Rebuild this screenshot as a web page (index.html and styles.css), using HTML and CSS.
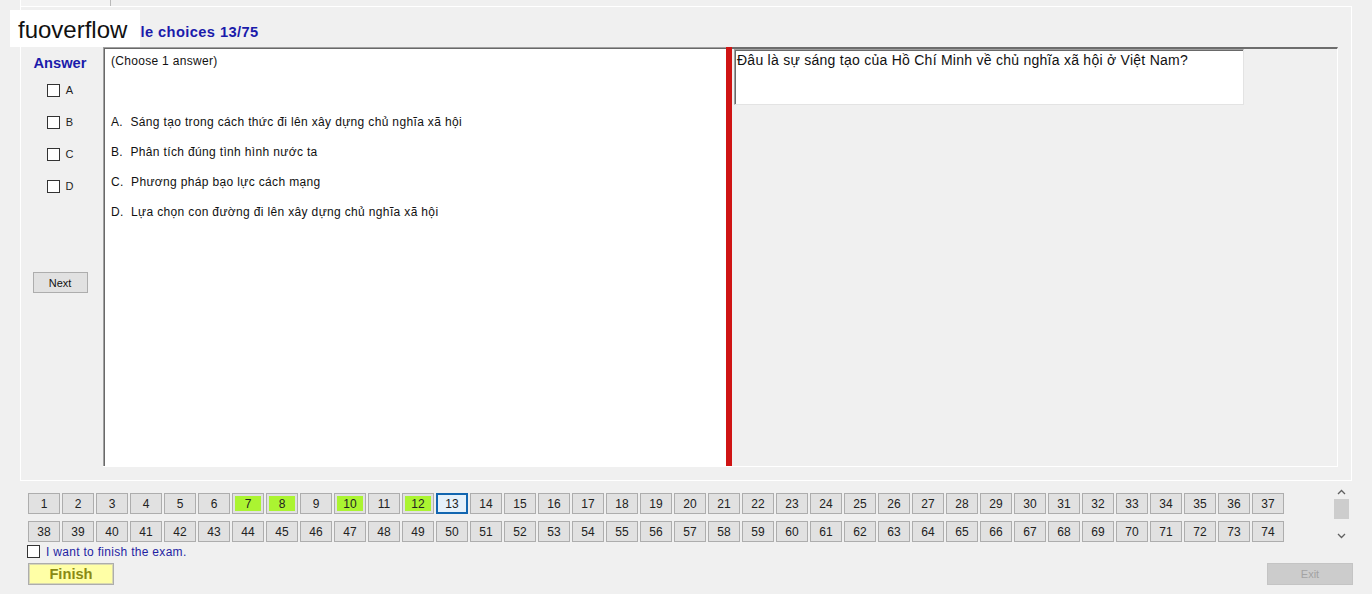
FILE: index.html
```html
<!DOCTYPE html>
<html lang="vi">
<head>
<meta charset="utf-8">
<title>Multiple choices</title>
<link rel="stylesheet" href="styles.css">
</head>
<body>
<div class="tabstrip"><div class="tab"></div></div>
<div class="tabpage">
  <div class="title">Multiple choices 13/75</div>
  <div class="main">
    <div class="answers">
      <div class="answer-head">Answer</div>
      <label class="opt"><span class="cb"></span><span>A</span></label>
      <label class="opt"><span class="cb"></span><span>B</span></label>
      <label class="opt"><span class="cb"></span><span>C</span></label>
      <label class="opt"><span class="cb"></span><span>D</span></label>
      <button class="next">Next</button>
    </div>
    <div class="split">
      <div class="left-pane">
        <div class="choose">(Choose 1 answer)</div>
        <div class="option">A.  Sáng tạo trong cách thức đi lên xây dựng chủ nghĩa xã hội</div>
        <div class="option">B.  Phân tích đúng tình hình nước ta</div>
        <div class="option">C.  Phương pháp bạo lực cách mạng</div>
        <div class="option">D.  Lựa chọn con đường đi lên xây dựng chủ nghĩa xã hội</div>
      </div>
      <div class="splitter"></div>
      <div class="right-pane">
        <div class="qbox">Đâu là sự sáng tạo của Hồ Chí Minh về chủ nghĩa xã hội ở Việt Nam?</div>
      </div>
    </div>
  </div>
</div>

<div class="numbers">
  <div class="grid">
    <button class="num">1</button><button class="num">2</button><button class="num">3</button><button class="num">4</button><button class="num">5</button><button class="num">6</button><button class="num g">7</button><button class="num g">8</button><button class="num">9</button><button class="num g">10</button><button class="num">11</button><button class="num g">12</button><button class="num cur">13</button><button class="num">14</button><button class="num">15</button><button class="num">16</button><button class="num">17</button><button class="num">18</button><button class="num">19</button><button class="num">20</button><button class="num">21</button><button class="num">22</button><button class="num">23</button><button class="num">24</button><button class="num">25</button><button class="num">26</button><button class="num">27</button><button class="num">28</button><button class="num">29</button><button class="num">30</button><button class="num">31</button><button class="num">32</button><button class="num">33</button><button class="num">34</button><button class="num">35</button><button class="num">36</button><button class="num">37</button>
    <button class="num">38</button><button class="num">39</button><button class="num">40</button><button class="num">41</button><button class="num">42</button><button class="num">43</button><button class="num">44</button><button class="num">45</button><button class="num">46</button><button class="num">47</button><button class="num">48</button><button class="num">49</button><button class="num">50</button><button class="num">51</button><button class="num">52</button><button class="num">53</button><button class="num">54</button><button class="num">55</button><button class="num">56</button><button class="num">57</button><button class="num">58</button><button class="num">59</button><button class="num">60</button><button class="num">61</button><button class="num">62</button><button class="num">63</button><button class="num">64</button><button class="num">65</button><button class="num">66</button><button class="num">67</button><button class="num">68</button><button class="num">69</button><button class="num">70</button><button class="num">71</button><button class="num">72</button><button class="num">73</button><button class="num">74</button>
  </div>
  <div class="sb">
    <div class="sb-arrow"><svg width="9" height="6" viewBox="0 0 9 6"><polyline points="1,5 4.5,1.5 8,5" fill="none" stroke="#606060" stroke-width="1.3"/></svg></div>
    <div class="sb-thumb"></div>
    <div class="sb-track"></div>
    <div class="sb-arrow"><svg width="9" height="6" viewBox="0 0 9 6"><polyline points="1,1 4.5,4.5 8,1" fill="none" stroke="#606060" stroke-width="1.3"/></svg></div>
  </div>
</div>

<label class="finish-check"><span class="cb dark"></span><span>I want to finish the exam.</span></label>
<div class="actions">
  <button class="finish">Finish</button>
  <button class="exit">Exit</button>
</div>

<div class="watermark">fuoverflow</div>
</body>
</html>
```

FILE: styles.css
```css
* { box-sizing: border-box; }
html, body { margin: 0; padding: 0; }
body {
  width: 1372px;
  height: 594px;
  overflow: hidden;
  background: #f0f0f0;
  font-family: "Liberation Sans", Arial, sans-serif;
  color: #000;
  position: relative;
}
button { font-family: inherit; padding: 0; margin: 0; cursor: default; }

.tabstrip { height: 6px; }
.tab {
  margin-left: 20px;
  width: 91px;
  height: 6px;
  border-left: 1px solid #fff;
  border-right: 1px solid #b9b9b9;
  background: #f3f3f3;
}
.tabpage {
  margin-left: 20px;
  width: 1332px;
  height: 475px;
  border: 1px solid #fff;
}
.title {
  height: 40px;
  padding: 17px 0 0 74px;
  font-weight: bold;
  font-size: 14.67px;
  line-height: 16px;
  letter-spacing: 0.4px;
  color: #1b1bab;
}
.main { display: flex; height: 420px; }

.answers {
  width: 82px;
  padding: 8px 4px 0 0;
  display: flex;
  flex-direction: column;
  align-items: center;
}
.answer-head {
  font-weight: bold;
  font-size: 14.67px;
  line-height: 16px;
  color: #1b1bab;
  margin-bottom: 3px;
}
.opt {
  height: 32px;
  display: flex;
  align-items: center;
  gap: 6px;
  font-size: 11px;
  color: #222;
}
.cb {
  width: 13px;
  height: 13px;
  border: 1px solid #333;
  background: #fff;
  flex: none;
}
.next {
  margin-top: 70px;
  width: 55px;
  height: 21px;
  border: 1px solid #adadad;
  background: #e1e1e1;
  font-size: 11px;
  color: #111;
}

.split {
  width: 1235px;
  display: flex;
  border-bottom: 1px solid #fff;
}
.left-pane {
  width: 623px;
  background: #fff;
  border-top: 1px solid #a0a0a0;
  border-left: 1px solid #a0a0a0;
  box-shadow: inset 1px 1px 0 #696969;
  padding: 6px 0 0 7px;
  font-size: 12px;
  line-height: 14px;
  letter-spacing: 0.35px;
  color: #111;
}
.choose { margin-bottom: 47px; letter-spacing: 0.3px; }
.option { margin-bottom: 16px; white-space: pre; }
.splitter { width: 6px; background: #cf1414; }
.right-pane {
  flex: 1;
  border-top: 2px solid #6d6d6d;
  border-right: 1px solid #fff;
  padding-left: 2px;
}
.qbox {
  width: 510px;
  height: 56px;
  background: #fff;
  border-top: 1px solid #a0a0a0;
  border-left: 1px solid #a0a0a0;
  border-right: 1px solid #e3e3e3;
  border-bottom: 1px solid #e3e3e3;
  box-shadow: inset 1px 1px 0 #696969;
  padding: 2px 0 0 2px;
  font-size: 14px;
  line-height: 16px;
  letter-spacing: 0.26px;
  color: #111;
}

.numbers {
  display: flex;
  margin-top: 3px;
  height: 61px;
}
.grid {
  margin: 9px 0 0 28px;
  width: 1256px;
  display: flex;
  flex-wrap: wrap;
  row-gap: 7px;
  column-gap: 2px;
  align-content: flex-start;
}
.num {
  width: 32px;
  height: 21px;
  border: 1px solid #adadad;
  background: #e1e1e1;
  font-size: 12px;
  color: #222;
  display: flex;
  align-items: center;
  justify-content: center;
}
.num.g { background: #abf431; box-shadow: inset 0 0 0 2px #e1e1e1; }
.num.cur { border: 2px solid #1266b0; background: #e5f1fb; }

.sb {
  margin-left: 50px;
  width: 15px;
  height: 59px;
  display: flex;
  flex-direction: column;
}
.sb-arrow { height: 15px; display: flex; align-items: center; justify-content: center; }
.sb-thumb { height: 20px; background: #cdcdcd; }
.sb-track { flex: 1; }

.finish-check {
  display: flex;
  align-items: center;
  gap: 6px;
  margin-left: 27px;
  height: 13px;
  font-size: 12px;
  letter-spacing: 0.3px;
  color: #1f1fa3;
}
.actions {
  display: flex;
  justify-content: space-between;
  margin: 5px 0 0 28px;
  width: 1325px;
}
.finish {
  width: 86px;
  height: 22px;
  background: #ffffa6;
  border: 1px solid #adadad;
  box-shadow: inset 0 0 0 1px #d8d8b0;
  font-weight: bold;
  font-size: 14.67px;
  color: #8a8a14;
}
.exit {
  width: 86px;
  height: 22px;
  background: #cccccc;
  border: 1px solid #c4c4c4;
  color: #a3a3a3;
  font-size: 11px;
}

.watermark {
  position: absolute;
  left: 10px;
  top: 10px;
  width: 130px;
  height: 37px;
  background: #fff;
  padding: 1px 0 0 8px;
  font-size: 24px;
  line-height: 38px;
  color: #111;
}
```
